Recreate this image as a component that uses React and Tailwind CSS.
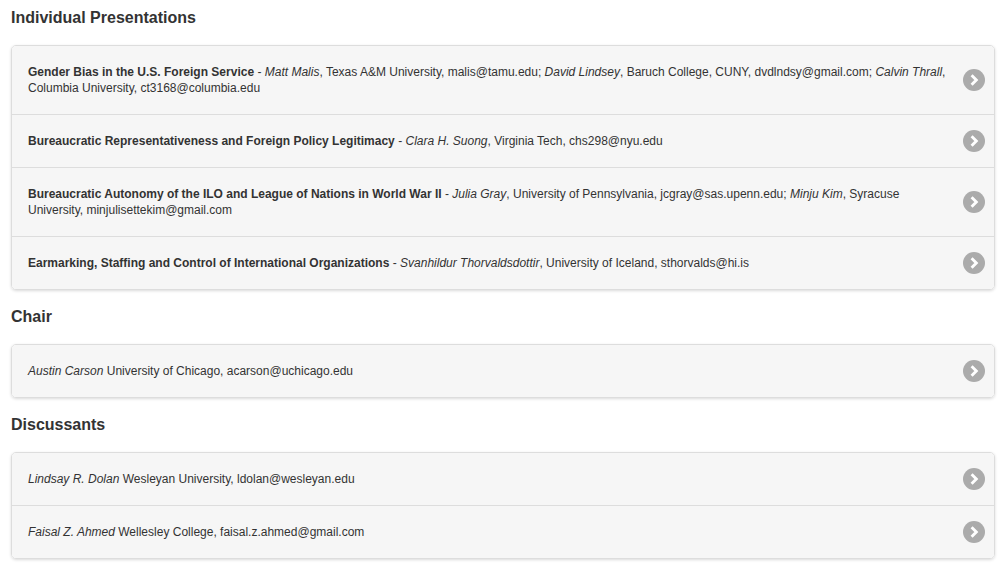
import React from "react";

function Chevron() {
  return (
    <svg width="22" height="22" viewBox="0 0 22 22" className="shrink-0">
      <circle cx="11" cy="11" r="11" fill="#ababab" />
      <path d="M8.6 6.3 L13.3 11 L8.6 15.7" fill="none" stroke="#fff" strokeWidth="2.9" strokeLinecap="butt" strokeLinejoin="miter" />
    </svg>
  );
}

function Row({ children, first }) {
  return (
    <div className={"flex items-center bg-[#f6f6f6] pl-[16px] pr-[9px] " + (first ? "" : "border-t border-[#dddddd]")}>
      <div className="flex-1 py-[18px] pr-[16px] text-[12px] leading-[16px] text-[#333333]">{children}</div>
      <Chevron />
    </div>
  );
}

function Card({ children }) {
  return (
    <div className="overflow-hidden rounded-[5px] border border-[#dddddd] shadow-[0_1px_3px_rgba(0,0,0,0.15)]">
      {children}
    </div>
  );
}

function Heading({ children, first }) {
  return (
    <h2 className={"text-[16px] leading-[20px] font-bold text-[#333333] mb-[17px] " + (first ? "" : "mt-[17px]")}>
      {children}
    </h2>
  );
}

export default function App() {
  return (
    <div className="min-h-[571px] bg-white px-[11px] pt-[8px] pb-[12px]" style={{ fontFamily: '"Liberation Sans", Arial, Helvetica, sans-serif' }}>
      <Heading first>Individual Presentations</Heading>
      <Card>
        <Row first>
          <b>Gender Bias in the U.S. Foreign Service</b> - <i>Matt Malis</i>, Texas A&amp;M University, malis@tamu.edu; <i>David Lindsey</i>, Baruch College, CUNY, dvdlndsy@gmail.com; <i>Calvin Thrall</i>, Columbia University, ct3168@columbia.edu
        </Row>
        <Row>
          <b>Bureaucratic Representativeness and Foreign Policy Legitimacy</b> - <i>Clara H. Suong</i>, Virginia Tech, chs298@nyu.edu
        </Row>
        <Row>
          <b>Bureaucratic Autonomy of the ILO and League of Nations in World War II</b> - <i>Julia Gray</i>, University of Pennsylvania, jcgray@sas.upenn.edu; <i>Minju Kim</i>, Syracuse University, minjulisettekim@gmail.com
        </Row>
        <Row>
          <b>Earmarking, Staffing and Control of International Organizations</b> - <i>Svanhildur Thorvaldsdottir</i>, University of Iceland, sthorvalds@hi.is
        </Row>
      </Card>
      <Heading>Chair</Heading>
      <Card>
        <Row first>
          <i>Austin Carson</i> University of Chicago, acarson@uchicago.edu
        </Row>
      </Card>
      <Heading>Discussants</Heading>
      <Card>
        <Row first>
          <i>Lindsay R. Dolan</i> Wesleyan University, ldolan@wesleyan.edu
        </Row>
        <Row>
          <i>Faisal Z. Ahmed</i> Wellesley College, faisal.z.ahmed@gmail.com
        </Row>
      </Card>
    </div>
  );
}
